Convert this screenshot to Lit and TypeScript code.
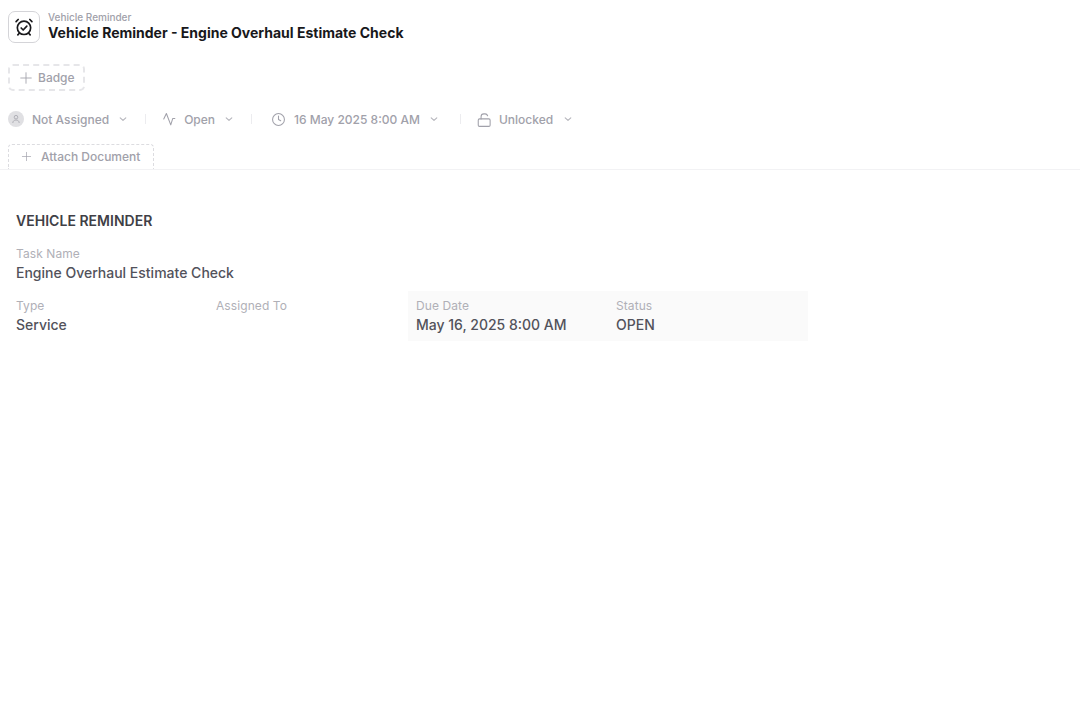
import { LitElement, html, css, svg } from "lit";
import { customElement } from "lit/decorators.js";

const icon = (size: number, body: unknown, sw = 1.5) => html`<svg class="ico" width=${size} height=${size} viewBox="0 0 24 24" fill="none" stroke="currentColor" stroke-width=${sw} stroke-linecap="round" stroke-linejoin="round">${body}</svg>`;
const chevron = html`<svg class="chev" width="10" height="10" viewBox="0 0 10 10" fill="none" stroke="#b4b4bb" stroke-width="1.1" stroke-linecap="round" stroke-linejoin="round"><path d="M2.2 3.8 5 6.4 7.8 3.8"/></svg>`;

@customElement("app-root")
export class AppRoot extends LitElement {
  static styles = css`
    :host { display: block; width: 1080px; height: 720px; background: #fff; font-family: Inter, "Liberation Sans", sans-serif; overflow: hidden; }
    .ico, .chev { display: block; flex: none; }
    .head { display: flex; flex-direction: column; align-items: flex-start; padding: 11px 8px 0; height: 158px; border-bottom: 1px solid #f2f2f4; }
    .title-row { display: flex; align-items: center; gap: 8px; height: 32px; }
    .logo { width: 32px; height: 32px; box-sizing: border-box; border: 1px solid #d4d4d8; border-radius: 7px; display: flex; align-items: center; justify-content: center; color: #18181b; }
    .titles { display: flex; flex-direction: column; margin-top: -1px; }
    .crumb { font-size: 10px; line-height: 13px; font-weight: 500; color: #a1a1aa; }
    .title { font-size: 14px; line-height: 18px; font-weight: 700; color: #18181b; }
    .badge { margin-top: 21px; height: 27px; width: 77px; box-sizing: border-box; border: 2px dashed #e6e6e9; border-radius: 5px; display: flex; align-items: center; gap: 5px; padding-left: 9px; font-size: 12px; font-weight: 500; color: #a1a1aa; }
    .meta { margin-top: 20px; height: 16px; display: flex; align-items: center; font-size: 12px; font-weight: 500; color: #a1a1aa; white-space: nowrap; }
    .avatar { width: 16px; height: 16px; border-radius: 50%; background: #e0e0e3; display: flex; align-items: center; justify-content: center; color: #b0b0b7; margin-right: 8px; }
    .m { display: flex; align-items: center; }
    .m .chev { margin-left: 9px; }
    .m .lbl-lock + .chev { margin-left: 10px; }
    .lbl { margin-left: 8px; }
    .lbl-lock { margin-left: 7px; }
    .sep { width: 1px; height: 10px; background: #ececef; }
    .s1 { margin: 0 16px 0 17px; }
    .s2 { margin: 0 19px 0 17px; }
    .s3 { margin: 0 16px 0 21px; }
    .attach { margin-top: 17px; width: 146px; height: 25px; box-sizing: border-box; border: 1px dashed #dcdce0; border-bottom: none; border-radius: 4px 4px 0 0; display: flex; align-items: center; gap: 9px; padding: 0 0 1px 12px; font-size: 12px; font-weight: 500; color: #a1a1aa; }
    .body { padding: 42px 16px 0; }
    h2 { margin: 0; font-size: 14px; line-height: 17px; font-weight: 600; letter-spacing: 0.002em; color: #3f3f46; }
    .grid { margin-top: 16px; width: 800px; display: grid; grid-template-columns: repeat(4, 200px); }
    .field { display: flex; flex-direction: column; }
    .wide { grid-column: 1 / -1; margin-bottom: 14px; }
    .label { font-size: 12px; line-height: 18px; letter-spacing: 0.007em; color: #b0b0b7; }
    .value { font-size: 14px; line-height: 20px; font-weight: 500; color: #52525b; min-height: 20px; }
    .shade { grid-column: 3 / 5; display: grid; grid-template-columns: 200px 200px; background: #fafafa; margin: -6px 0 0 -8px; padding: 6px 0 6px 8px; width: 400px; box-sizing: border-box; }
  `;

  render() {
    return html`
      <div class="head">
        <div class="title-row">
          <div class="logo">
            ${icon(20, svg`<circle cx="12" cy="13" r="8"/><path d="M8.600 13.200l2.400 2.400 4.400-4.600"/><path d="M5 3 2.500 5.500M19 3l2.500 2.500M6.400 19.500l-1.800 2M17.600 19.500l1.800 2"/>`, 2)}
          </div>
          <div class="titles">
            <div class="crumb">Vehicle Reminder</div>
            <div class="title">Vehicle Reminder - Engine Overhaul Estimate Check</div>
          </div>
        </div>
        <div class="badge">
          ${icon(14, svg`<path d="M12 3v18M3 12h18"/>`)}
          <span>Badge</span>
        </div>
        <div class="meta">
          <div class="m">
            <span class="avatar"><svg width="10" height="10" viewBox="0 0 10 10" fill="none" stroke="currentColor" stroke-width="1"><circle cx="5" cy="3.200" r="1.800"/><path d="M1.800 9c0-1.900 1.400-3 3.200-3s3.200 1.100 3.200 3"/></svg></span>
            <span>Not Assigned</span>${chevron}
          </div>
          <span class="sep s1"></span>
          <div class="m">
            ${icon(14, svg`<path d="M3 12 7.500 2.500 15 22l3.500-11H22"/>`, 1.8)}
            <span class="lbl">Open</span>${chevron}
          </div>
          <span class="sep s2"></span>
          <div class="m">
            ${icon(15, svg`<circle cx="12" cy="12" r="9.500"/><path d="M12 6.500V12l3.500 2"/>`, 1.7)}
            <span class="lbl">16 May 2025 8:00 AM</span>${chevron}
          </div>
          <span class="sep s3"></span>
          <div class="m">
            ${icon(15, svg`<rect x="2" y="11" width="19" height="12" rx="2"/><path d="M6.500 11V7.500a4.500 4.500 0 0 1 4.500-4.500h2a4.500 4.500 0 0 1 4 3"/>`, 1.7)}
            <span class="lbl-lock">Unlocked</span>${chevron}
          </div>
        </div>
        <div class="attach">
          ${icon(11, svg`<path d="M12 3v18M3 12h18"/>`)}
          <span>Attach Document</span>
        </div>
      </div>
      <div class="body">
        <h2>VEHICLE REMINDER</h2>
        <div class="grid">
          <div class="field wide">
            <span class="label">Task Name</span>
            <span class="value">Engine Overhaul Estimate Check</span>
          </div>
          <div class="field"><span class="label">Type</span><span class="value">Service</span></div>
          <div class="field"><span class="label">Assigned To</span><span class="value"></span></div>
          <div class="shade">
            <div class="field"><span class="label">Due Date</span><span class="value">May 16, 2025 8:00 AM</span></div>
            <div class="field"><span class="label">Status</span><span class="value">OPEN</span></div>
          </div>
        </div>
      </div>
    `;
  }
}
